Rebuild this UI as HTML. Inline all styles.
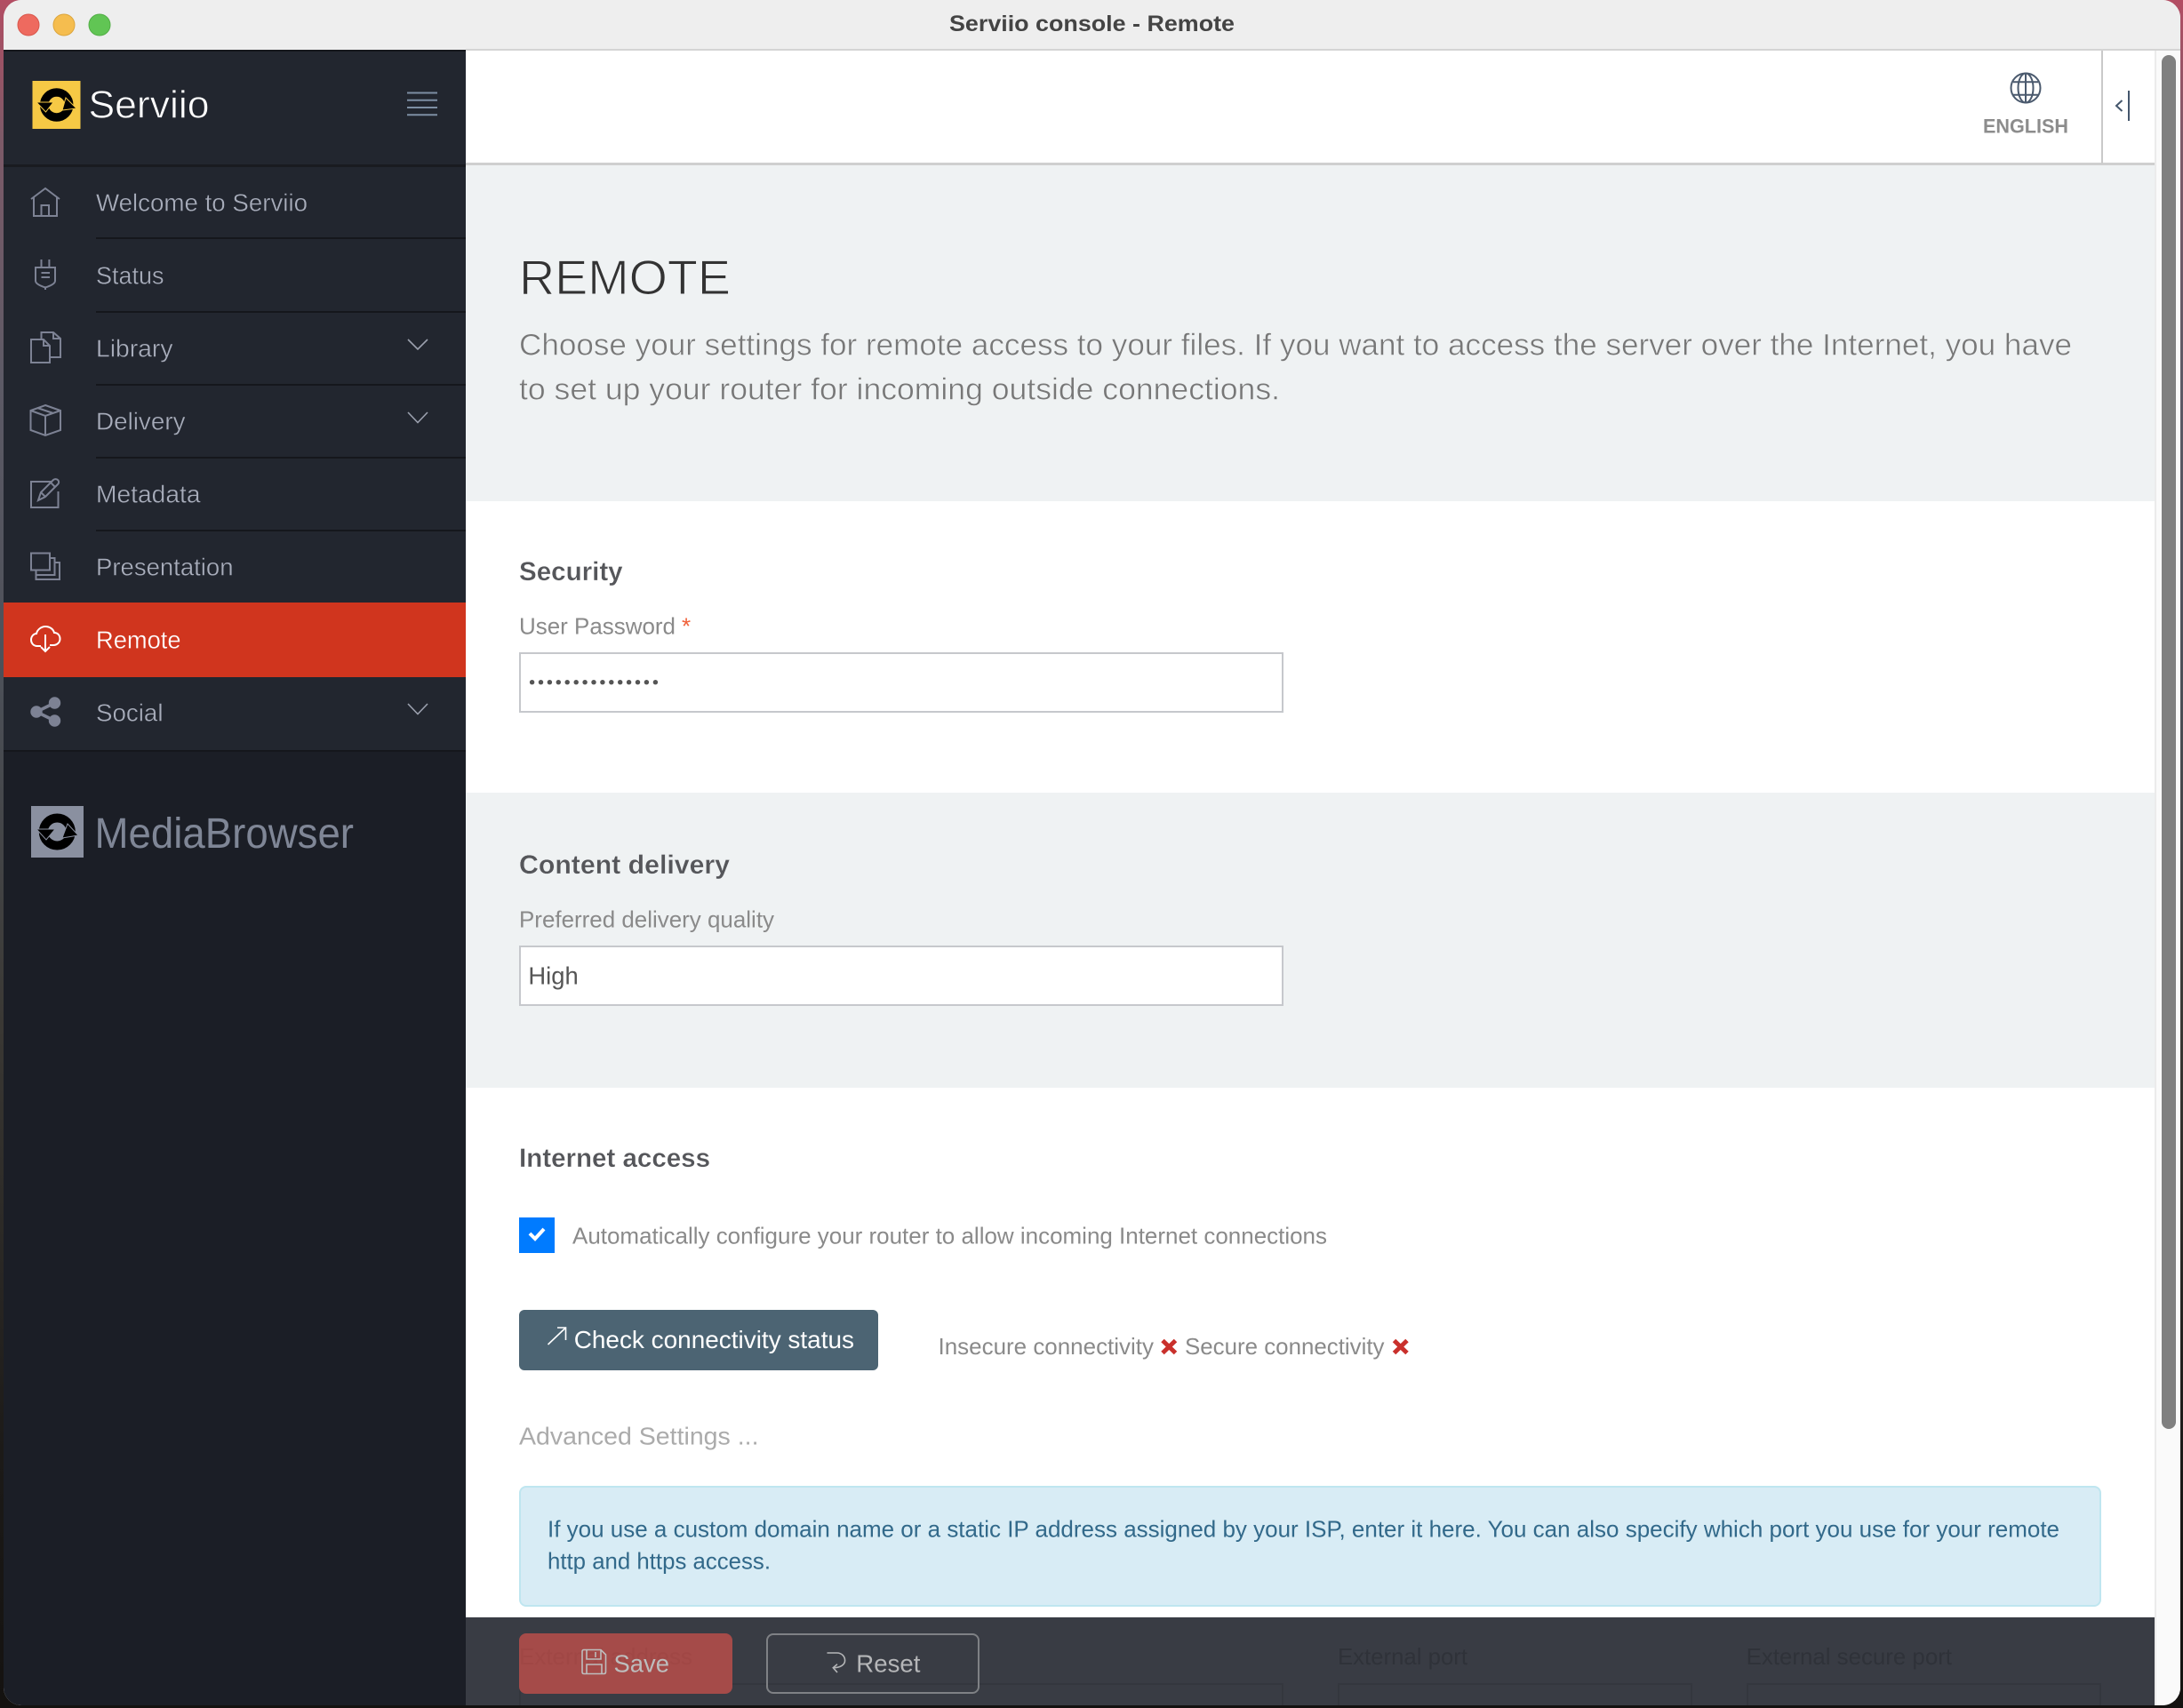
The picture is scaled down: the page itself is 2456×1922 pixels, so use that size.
<!DOCTYPE html>
<html lang="en">
<head>
<meta charset="utf-8">
<title>Serviio console - Remote</title>
<style>
html,body{margin:0;padding:0;width:2456px;height:1922px;overflow:hidden;background:#17120f}
#desk{position:absolute;left:0;top:0;width:2456px;height:1922px;overflow:hidden;background:linear-gradient(180deg,#b34d63 0,#7d5a68 8%,#5d5a66 22%,#4c5058 40%,#3a3834 60%,#1c1a18 85%,#141210 100%)}
#win{position:absolute;left:0;top:0;width:2456px;height:1922px;overflow:hidden;clip-path:inset(0 3px 3px 4px round 20px);background:#fff}
#win div{position:absolute;box-sizing:border-box}
svg{position:absolute;left:0;top:0}
text{font-family:"Liberation Sans",sans-serif}
</style>
</head>
<body>
<div id="desk"></div>
<div id="win">
  <div style="left:0;top:0;width:2456px;height:56px;background:#eeeeee"></div>
  <div style="left:524px;top:55px;width:1932px;height:2px;background:#d4d4d4"></div>

  <!-- sidebar -->
  <div style="left:0;top:56px;width:524px;height:1866px;background:#1b1e26"></div>
  <div style="left:0;top:56px;width:524px;height:789px;background:#22262f"></div>
  <div style="left:0;top:56px;width:524px;height:2px;background:#15171c"></div>
  <div style="left:0;top:185px;width:524px;height:3px;background:#191b20"></div>
  <div style="left:108px;top:267px;width:416px;height:2px;background:#15171c"></div>
  <div style="left:108px;top:350px;width:416px;height:2px;background:#15171c"></div>
  <div style="left:108px;top:432px;width:416px;height:2px;background:#15171c"></div>
  <div style="left:108px;top:514px;width:416px;height:2px;background:#15171c"></div>
  <div style="left:108px;top:596px;width:416px;height:2px;background:#15171c"></div>
  <div style="left:0;top:678px;width:524px;height:84px;background:#d0351e"></div>
  <div style="left:0;top:844px;width:524px;height:2px;background:#15171c"></div>

  <!-- top header -->
  <div style="left:524px;top:57px;width:1900px;height:127px;background:#fff"></div>
  <div style="left:524px;top:183px;width:1900px;height:3px;background:#cfcfcf"></div>
  <div style="left:2364px;top:57px;width:2px;height:127px;background:#c9c9c9"></div>

  <!-- content sections -->
  <div style="left:524px;top:186px;width:1900px;height:378px;background:#eff2f3"></div>
  <div style="left:524px;top:564px;width:1900px;height:328px;background:#ffffff"></div>
  <div style="left:524px;top:892px;width:1900px;height:332px;background:#eff2f3"></div>
  <div style="left:524px;top:1224px;width:1900px;height:600px;background:#ffffff"></div>

  <div style="left:584px;top:734px;width:860px;height:68px;background:#fff;border:2px solid #c6c8cc"></div>
  <div style="left:584px;top:1064px;width:860px;height:68px;background:#fff;border:2px solid #c6c8cc"></div>
  <div style="left:584px;top:1370px;width:40px;height:40px;background:#007bff"></div>
  <div style="left:584px;top:1474px;width:404px;height:68px;background:#4c6473;border-radius:6px"></div>
  <div style="left:584px;top:1672px;width:1780px;height:136px;background:#d8ecf5;border:2px solid #bfe6f0;border-radius:8px"></div>

  <!-- footer -->
  <div style="left:524px;top:1820px;width:1900px;height:102px;background:#393c44"></div>
  <div style="left:584px;top:1894px;width:860px;height:28px;border:2px solid #34373e;border-bottom:0"></div>
  <div style="left:1505px;top:1894px;width:399px;height:28px;border:2px solid #34373e;border-bottom:0"></div>
  <div style="left:1965px;top:1894px;width:399px;height:28px;border:2px solid #34373e;border-bottom:0"></div>
  <div style="left:584px;top:1838px;width:240px;height:68px;background:#a54b49;border-radius:8px"></div>
  <div style="left:862px;top:1838px;width:240px;height:68px;border:2px solid #7f8185;border-radius:8px"></div>

  <!-- scrollbar -->
  <div style="left:2424px;top:57px;width:32px;height:1865px;background:#fafafa;border-left:2px solid #ebebeb"></div>
  <div style="left:2432px;top:62px;width:16px;height:1546px;background:#808080;border-radius:8px"></div>

  <svg width="2456" height="1922" viewBox="0 0 2456 1922">
    <!-- traffic lights -->
    <circle cx="32" cy="28" r="12" fill="#ee6a5f" stroke="#d9574c" stroke-width="1"/>
    <circle cx="72" cy="28" r="12" fill="#f5bd4f" stroke="#dca53c" stroke-width="1"/>
    <circle cx="112" cy="28" r="12" fill="#61c554" stroke="#52ae46" stroke-width="1"/>
    <text x="1068" y="35" font-size="25" font-weight="700" fill="#444" textLength="321" lengthAdjust="spacingAndGlyphs">Serviio console - Remote</text>

    <!-- Serviio logo -->
    <rect x="36.5" y="91" width="54" height="54" fill="#f6c945"/>
    <circle cx="63.7" cy="118" r="14" fill="none" stroke="#000" stroke-width="9.5"/>
    <path d="M41 115L60 115L51.5 126Z" fill="#000" stroke="#f6c945" stroke-width="1"/>
    <path d="M74 110L86 122L70 124Z" fill="#000" stroke="#f6c945" stroke-width="1"/>
    <text x="99.5" y="132.5" font-size="44" fill="#ffffff" stroke="#22262f" stroke-width=".7" textLength="136" lengthAdjust="spacingAndGlyphs">Serviio</text>
    <g stroke="#7d8ea3" stroke-width="2"><path d="M458 104.5H492M458 112.7H492M458 121H492M458 129.2H492"/></g>

    <!-- menu text -->
    <g font-size="28" fill="#a8adbb" stroke="#22262f" stroke-width=".4">
      <text x="108" y="237.5" textLength="238" lengthAdjust="spacingAndGlyphs">Welcome to Serviio</text>
      <text x="108" y="319.5" textLength="76.5" lengthAdjust="spacingAndGlyphs">Status</text>
      <text x="108" y="401.5" textLength="86.5" lengthAdjust="spacingAndGlyphs">Library</text>
      <text x="108" y="483.5" textLength="100.5" lengthAdjust="spacingAndGlyphs">Delivery</text>
      <text x="108" y="565.5" textLength="117.5" lengthAdjust="spacingAndGlyphs">Metadata</text>
      <text x="108" y="647.5" textLength="154.5" lengthAdjust="spacingAndGlyphs">Presentation</text>
      <text x="108" y="729.5" fill="#ffffff" stroke="#d0351e" stroke-width=".3" textLength="95.5" lengthAdjust="spacingAndGlyphs">Remote</text>
      <text x="108" y="811.5" textLength="75.5" lengthAdjust="spacingAndGlyphs">Social</text>
    </g>

    <!-- menu icons -->
    <g fill="none" stroke="#7d8294" stroke-width="2">
      <path d="M35 224L51 212L67 224"/>
      <path d="M38 222V243H64V222"/>
      <path d="M46.5 243V231H55V243"/>
      <path d="M46.5 292V300M55.4 292V300"/>
      <path d="M40 301H62V316Q62 320 51 323.5Q40 320 40 316Z"/>
      <path d="M51 323V326M46.5 307H56M46.5 312H56"/>
      <path d="M35 382H49L56 389V408H35Z"/>
      <path d="M49 382V389H56"/>
      <path d="M46.5 381V374H60L68 381V402H57"/>
      <path d="M60 374V381H68"/>
      <path d="M51 456L68 462V484L51 490L34.5 484V462Z"/>
      <path d="M34.5 462L51 468L68 462M51 468V490M42 459L60 465"/>
      <path d="M58 542H35V571H65.5V553"/>
      <path d="M43 563L46 554L60 540Q63 538 65.5 540.5Q67 543 65 545L51 559Z"/>
      <path d="M46 554L51 559M57 543L62 548"/>
      <rect x="35" y="622.5" width="21" height="19"/>
      <path d="M56 628H61.5V647H40.5V641.5"/>
      <path d="M61.5 633H67V652H40.5V647"/>
    </g>
    <g fill="none" stroke="#ffffff" stroke-width="2">
      <path d="M46 727H42C37 727 35 723 35 720C35 716 38 713 41 713C42 708 47 705 51 705C56 705 60 708 61 712C65 712 67.5 715 67.5 719C67.5 723 64 726 60 726H56"/>
      <path d="M51 714V733M46 728L51 733L56 728"/>
    </g>
    <g fill="#7d8294" stroke="#7d8294">
      <circle cx="61.5" cy="791" r="6.2"/><circle cx="41" cy="801" r="6.2"/><circle cx="61.5" cy="811" r="6.2"/>
      <path d="M61.5 791L41 801L61.5 811" fill="none" stroke-width="3.6"/>
    </g>
    <g fill="none" stroke="#9ba0ae" stroke-width="1.6">
      <path d="M459 382L470 393L481 382"/>
      <path d="M459 464L470 475.5L481 464"/>
      <path d="M459 792L470 803.5L481 792"/>
    </g>

    <!-- MediaBrowser logo -->
    <rect x="35" y="907" width="59" height="58" fill="#8a90a0"/>
    <circle cx="64.3" cy="936" r="15.5" fill="none" stroke="#000" stroke-width="10"/>
    <path d="M41 933L62 933L52 945Z" fill="#000" stroke="#8a90a0" stroke-width="1"/>
    <path d="M76 927L88 940L70 943Z" fill="#000" stroke="#8a90a0" stroke-width="1"/>
    <text x="106.5" y="953.8" font-size="48" fill="#7f8696" textLength="291.5" lengthAdjust="spacingAndGlyphs">MediaBrowser</text>

    <!-- header right -->
    <g fill="none" stroke="#4b5a6e" stroke-width="2">
      <circle cx="2279" cy="99" r="16.5"/>
      <ellipse cx="2279" cy="99" rx="8.5" ry="16.5"/>
      <path d="M2279 82.5V115.5M2265 92.3H2293M2265 106.7H2293"/>
    </g>
    <text x="2231" y="149.7" font-size="22" font-weight="700" fill="#8c8c8c" textLength="96" lengthAdjust="spacingAndGlyphs">ENGLISH</text>
    <path d="M2387.5 113L2381 119L2387.5 125" fill="none" stroke="#44566c" stroke-width="2"/>
    <path d="M2395 102V136" stroke="#44566c" stroke-width="2"/>

    <!-- page heading -->
    <text x="584" y="331.2" font-size="55" fill="#333" stroke="#eff2f3" stroke-width="1.1" textLength="238" lengthAdjust="spacingAndGlyphs">REMOTE</text>
    <text x="584" y="399.3" font-size="34" fill="#777" stroke="#eff2f3" stroke-width=".55" textLength="1747" lengthAdjust="spacingAndGlyphs">Choose your settings for remote access to your files. If you want to access the server over the Internet, you have</text>
    <text x="584" y="449.3" font-size="34" fill="#777" stroke="#eff2f3" stroke-width=".55" textLength="856" lengthAdjust="spacingAndGlyphs">to set up your router for incoming outside connections.</text>

    <!-- security -->
    <text x="584" y="653" font-size="30" font-weight="700" fill="#55565a" stroke="#fff" stroke-width=".3" textLength="116.6" lengthAdjust="spacingAndGlyphs">Security</text>
    <text x="584" y="713.3" font-size="26" fill="#8a8a8a" textLength="176" lengthAdjust="spacingAndGlyphs">User Password</text>
    <text x="767" y="713.3" font-size="26" fill="#f0613a">*</text>
    <g fill="#555">
      <circle cx="598.6" cy="767.7" r="2.7"/><circle cx="608.5" cy="767.7" r="2.7"/><circle cx="618.4" cy="767.7" r="2.7"/><circle cx="628.3" cy="767.7" r="2.7"/><circle cx="638.2" cy="767.7" r="2.7"/>
      <circle cx="648.2" cy="767.7" r="2.7"/><circle cx="658.1" cy="767.7" r="2.7"/><circle cx="668" cy="767.7" r="2.7"/><circle cx="677.9" cy="767.7" r="2.7"/><circle cx="687.8" cy="767.7" r="2.7"/>
      <circle cx="697.7" cy="767.7" r="2.7"/><circle cx="707.6" cy="767.7" r="2.7"/><circle cx="717.5" cy="767.7" r="2.7"/><circle cx="727.4" cy="767.7" r="2.7"/><circle cx="737.4" cy="767.7" r="2.7"/>
    </g>

    <!-- content delivery -->
    <text x="584" y="982.8" font-size="30" font-weight="700" fill="#55565a" stroke="#eff2f3" stroke-width=".3" textLength="237" lengthAdjust="spacingAndGlyphs">Content delivery</text>
    <text x="584" y="1043.5" font-size="26" fill="#8a8a8a" textLength="287" lengthAdjust="spacingAndGlyphs">Preferred delivery quality</text>
    <text x="594.4" y="1107.7" font-size="28" fill="#555" textLength="56.3" lengthAdjust="spacingAndGlyphs">High</text>

    <!-- internet access -->
    <text x="584" y="1312.8" font-size="30" font-weight="700" fill="#55565a" stroke="#fff" stroke-width=".3" textLength="215" lengthAdjust="spacingAndGlyphs">Internet access</text>
    <path d="M596 1388L602 1394L612 1383" fill="none" stroke="#fff" stroke-width="4"/>
    <text x="644" y="1399.5" font-size="26" fill="#8a8a8a" textLength="849" lengthAdjust="spacingAndGlyphs">Automatically configure your router to allow incoming Internet connections</text>
    <path d="M616.5 1513L636.5 1494M627 1494H636.5V1508" fill="none" stroke="#fff" stroke-width="1.6"/>
    <text x="645.7" y="1517" font-size="28" fill="#ffffff" textLength="315.3" lengthAdjust="spacingAndGlyphs">Check connectivity status</text>
    <text x="1055.5" y="1524" font-size="26" fill="#8a8a8a" textLength="242.5" lengthAdjust="spacingAndGlyphs">Insecure connectivity</text>
    <path d="M1308 1508.5L1322.5 1522.5M1322.5 1508.5L1308 1522.5" stroke="#c9302c" stroke-width="5"/>
    <text x="1333" y="1524" font-size="26" fill="#8a8a8a" textLength="224.5" lengthAdjust="spacingAndGlyphs">Secure connectivity</text>
    <path d="M1568.5 1508.5L1583 1522.5M1583 1508.5L1568.5 1522.5" stroke="#c9302c" stroke-width="5"/>
    <text x="584" y="1625.7" font-size="28" fill="#ababab" textLength="269.5" lengthAdjust="spacingAndGlyphs">Advanced Settings ...</text>

    <!-- info box -->
    <text x="616" y="1729.7" font-size="26" fill="#32698a" textLength="1701" lengthAdjust="spacingAndGlyphs">If you use a custom domain name or a static IP address assigned by your ISP, enter it here. You can also specify which port you use for your remote</text>
    <text x="616" y="1765.7" font-size="26" fill="#32698a" textLength="251" lengthAdjust="spacingAndGlyphs">http and https access.</text>

    <!-- footer contents -->
    <text x="584" y="1873" font-size="26" fill="#a04745" textLength="195" lengthAdjust="spacingAndGlyphs">External address</text>
    <text x="1505" y="1873" font-size="26" fill="#2f3239" textLength="146" lengthAdjust="spacingAndGlyphs">External port</text>
    <text x="1964.6" y="1873" font-size="26" fill="#2f3239" textLength="231.4" lengthAdjust="spacingAndGlyphs">External secure port</text>
    <g fill="none" stroke="#bdbdbd" stroke-width="1.6">
      <path d="M657 1856.5H676L681.5 1862V1881.5Q681.5 1883.5 679.5 1883.5H657Q655 1883.5 655 1881.5V1858.5Q655 1856.5 657 1856.5Z"/>
      <path d="M660 1857V1867H676V1857M660 1883V1873H677V1883M670 1859V1865"/>
    </g>
    <text x="690.5" y="1881.3" font-size="28" fill="#bdbdbd" textLength="62.5" lengthAdjust="spacingAndGlyphs">Save</text>
    <path d="M930.5 1860H941.7C947 1860 950.6 1864 950.6 1868.5C950.6 1873 946 1876.7 937.3 1876.7M942 1872.7L937.3 1876.7L942 1882" fill="none" stroke="#b5b6b8" stroke-width="1.6"/>
    <text x="963.3" y="1881.3" font-size="28" fill="#b5b6b8" textLength="72.1" lengthAdjust="spacingAndGlyphs">Reset</text>
  </svg>
</div>
</body>
</html>
